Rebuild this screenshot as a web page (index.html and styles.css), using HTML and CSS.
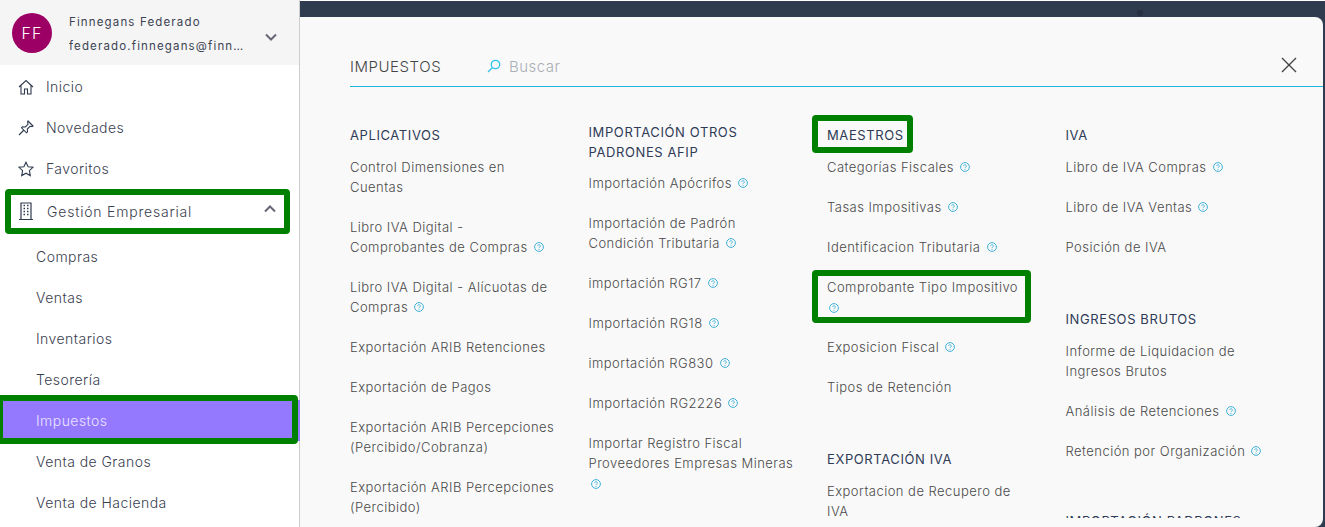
FILE: index.html
```html
<!DOCTYPE html>
<html lang="en">
<head>
    <meta charset="UTF-8">
    <meta name="viewport" content="width=device-width, initial-scale=1.0">
    <title>Impuestos</title>
    <link rel="stylesheet" href="styles.css">
</head>
<body>
    <svg class="defs" width="0" height="0">
        <symbol id="q" viewBox="0 0 10 10">
            <circle cx="5" cy="5" r="4.4" fill="none" stroke="#3fb2d6" stroke-width="1"/>
            <path d="M3.7 4a1.3 1.3 0 1 1 2 1.1c-.5.3-.7.5-.7 1" fill="none" stroke="#3fb2d6" stroke-width=".9"/>
            <circle cx="5" cy="7.3" r=".55" fill="#3fb2d6"/>
        </symbol>
    </svg>

    <aside class="sidebar">
        <div class="user">
            <div class="avatar">FF</div>
            <div class="user-info">
                <div class="user-name">Finnegans Federado</div>
                <div class="user-mail">federado.finnegans@finn…</div>
            </div>
            <svg class="chev" width="12" height="8" viewBox="0 0 12 8"><path d="M1 1.5l5 5 5-5" fill="none" stroke="#667" stroke-width="2"/></svg>
        </div>
        <nav>
            <a class="item">
                <svg class="ico" width="16" height="16" viewBox="0 0 16 16"><path d="M1 8l7-6.5L15 8M3 6.3V15h3.5v-5h3v5H13V6.3" fill="none" stroke="#2f3b4f" stroke-width="1.1"/></svg>
                Inicio
            </a>
            <a class="item">
                <svg class="ico" width="16" height="16" viewBox="0 0 16 16"><path d="M10 1l5 5-1 .6-2-.3-2.700 2.700.2 2.800-1 1-5-5 1-1 2.800.2L10 4.300 9.600 2zM5.500 10.500L1 15" fill="none" stroke="#2f3b4f" stroke-width="1.100"/></svg>
                Novedades
            </a>
            <a class="item">
                <svg class="ico" width="16" height="16" viewBox="0 0 16 16"><path d="M8 1.200l2.100 4.500 4.900.6-3.600 3.400.9 4.900L8 12.200l-4.300 2.400.9-4.900L1 6.300l4.900-.6z" fill="none" stroke="#2f3b4f" stroke-width="1.100"/></svg>
                Favoritos
            </a>
            <a class="item item-group">
                <svg class="ico ico-building" width="14" height="18" viewBox="0 0 14 18"><path d="M0 17.500h14M2 17V1h10v16" fill="none" stroke="#2f3b4f" stroke-width="1.200"/><path d="M4.500 3.500h1.500M8 3.500h1.500M4.500 6.500h1.500M8 6.500h1.500M4.500 9.500h1.500M8 9.500h1.500M4.500 12.500h1.500M8 12.500h1.500" stroke="#2f3b4f" stroke-width="1.500"/></svg>
                Gestión Empresarial
                <svg class="chev chev-up" width="12" height="8" viewBox="0 0 12 8"><path d="M1 6.500l5-5 5 5" fill="none" stroke="#667" stroke-width="2"/></svg>
                <span class="mark mark-group"></span>
            </a>
            <a class="item sub">Compras</a>
            <a class="item sub">Ventas</a>
            <a class="item sub">Inventarios</a>
            <a class="item sub">Tesorería</a>
            <a class="item sub active">Impuestos<span class="mark mark-active"></span></a>
            <a class="item sub">Venta de Granos</a>
            <a class="item sub">Venta de Hacienda</a>
        </nav>
    </aside>

    <main class="main">
        <span class="speck"></span>
        <section class="modal">
            <header class="modal-head">
                <div class="modal-title">IMPUESTOS</div>
                <svg class="search-ico" width="14" height="14" viewBox="0 0 14 14"><circle cx="8.500" cy="5.500" r="4.200" fill="none" stroke="#2cc4ee" stroke-width="1.300"/><path d="M5.500 8.500L1 13" stroke="#2cc4ee" stroke-width="1.300"/></svg>
                <div class="search-text">Buscar</div>
                <svg class="close" width="16" height="16" viewBox="0 0 16 16"><path d="M1 1l14 14M15 1L1 15" stroke="#444" stroke-width="1.400"/></svg>
            </header>
            <div class="modal-body">
                <div class="col">
                    <h4>APLICATIVOS</h4>
                    <a class="link">Control Dimensiones en<br>Cuentas</a>
                    <a class="link">Libro IVA Digital -<br>Comprobantes de Compras <svg class="q"><use href="#q"/></svg></a>
                    <a class="link">Libro IVA Digital - Alícuotas de<br>Compras <svg class="q"><use href="#q"/></svg></a>
                    <a class="link">Exportación ARIB Retenciones</a>
                    <a class="link">Exportación de Pagos</a>
                    <a class="link">Exportación ARIB Percepciones<br>(Percibido/Cobranza)</a>
                    <a class="link">Exportación ARIB Percepciones<br>(Percibido)</a>
                </div>
                <div class="col">
                    <h4 class="two-lines">IMPORTACIÓN OTROS<br>PADRONES AFIP</h4>
                    <a class="link">Importación Apócrifos <svg class="q"><use href="#q"/></svg></a>
                    <a class="link">Importación de Padrón<br>Condición Tributaria <svg class="q"><use href="#q"/></svg></a>
                    <a class="link">importación RG17 <svg class="q"><use href="#q"/></svg></a>
                    <a class="link">Importación RG18 <svg class="q"><use href="#q"/></svg></a>
                    <a class="link">importación RG830 <svg class="q"><use href="#q"/></svg></a>
                    <a class="link">Importación RG2226 <svg class="q"><use href="#q"/></svg></a>
                    <a class="link">Importar Registro Fiscal<br>Proveedores Empresas Mineras<br><svg class="q q-solo"><use href="#q"/></svg></a>
                </div>
                <div class="col">
                    <h4 class="marked">MAESTROS<span class="mark mark-head"></span></h4>
                    <a class="link">Categorías Fiscales <svg class="q"><use href="#q"/></svg></a>
                    <a class="link">Tasas Impositivas <svg class="q"><use href="#q"/></svg></a>
                    <a class="link">Identificacion Tributaria <svg class="q"><use href="#q"/></svg></a>
                    <a class="link marked">Comprobante Tipo Impositivo<br><svg class="q q-solo"><use href="#q"/></svg><span class="mark mark-link"></span></a>
                    <a class="link">Exposicion Fiscal <svg class="q"><use href="#q"/></svg></a>
                    <a class="link">Tipos de Retención</a>
                    <h4 class="next">EXPORTACIÓN IVA</h4>
                    <a class="link">Exportacion de Recupero de<br>IVA</a>
                </div>
                <div class="col">
                    <h4>IVA</h4>
                    <a class="link">Libro de IVA Compras <svg class="q"><use href="#q"/></svg></a>
                    <a class="link">Libro de IVA Ventas <svg class="q"><use href="#q"/></svg></a>
                    <a class="link">Posición de IVA</a>
                    <h4 class="next">INGRESOS BRUTOS</h4>
                    <a class="link">Informe de Liquidacion de<br>Ingresos Brutos</a>
                    <a class="link">Análisis de Retenciones <svg class="q"><use href="#q"/></svg></a>
                    <a class="link">Retención por Organización <svg class="q"><use href="#q"/></svg></a>
                    <h4 class="next last">IMPORTACIÓN PADRONES</h4>
                </div>
            </div>
        </section>
    </main>
</body>
</html>
```

FILE: styles.css
```css
body {
    font-family: Inter, "Noto Sans", sans-serif;
    margin: 0;
    padding: 0;
    display: flex;
    width: 1325px;
    height: 527px;
    overflow: hidden;
    background-color: #fff;
}

.defs {
    position: absolute;
}

/* Sidebar */
.sidebar {
    width: 299px;
    flex-shrink: 0;
    border-right: 1px solid #ccc;
    background-color: #fff;
}

.user {
    display: flex;
    align-items: center;
    height: 65px;
    box-sizing: border-box;
    padding-left: 12px;
    background-color: #f5f5f5;
}

.avatar {
    width: 40px;
    height: 40px;
    border-radius: 50%;
    background-color: #9c0065;
    color: #fff;
    font-size: 16px;
    font-weight: 300;
    letter-spacing: 1px;
    line-height: 40px;
    text-align: center;
    flex-shrink: 0;
}

.user-info {
    width: 178px;
    margin-left: 17px;
    padding-top: 2px;
    font-size: 11.5px;
    letter-spacing: 1.15px;
    color: #3c4353;
}

.user-name {
    line-height: 24px;
}

.user-mail {
    line-height: 24px;
    white-space: nowrap;
}

.chev {
    margin-left: 18px;
    margin-top: 9px;
}

.chev-up {
    margin-left: auto;
    margin-right: 23px;
    margin-top: -4px;
}

.item {
    display: flex;
    align-items: center;
    position: relative;
    height: 41px;
    padding-left: 18px;
    font-size: 14px;
    letter-spacing: 0.45px;
    font-weight: 300;
    color: #39404f;
}

nav {
    padding-top: 1px;
}

.ico {
    margin-right: 12px;
}

.ico-building {
    margin-left: 1px;
    margin-right: 14px;
}

.item-group {
    height: 42px;
    padding-top: 1px;
    margin-bottom: 4px;
    letter-spacing: 0.8px;
}

.sub {
    padding-left: 36px;
}

.active {
    background-color: #9479ff;
    color: #e9e4ff;
    margin-right: -1px;
}

/* green boxes drawn on top of the screenshot */
.mark {
    position: absolute;
    border: 6px solid #008000;
    border-radius: 4px;
    box-sizing: border-box;
}

.mark-group {
    left: 5px;
    top: 0;
    width: 285px;
    height: 45px;
}

.mark-active {
    left: -3px;
    top: -5px;
    width: 301px;
    height: 49px;
}

.mark-head {
    left: -15px;
    top: -10px;
    width: 101px;
    height: 38px;
}

.mark-link {
    left: -15px;
    top: -7px;
    width: 219px;
    height: 53px;
}

/* Modal */
.main {
    flex: 1;
    position: relative;
    margin-top: 1px;
    padding: 16px 2px 0 0;
    background-color: #2f3b4f;
}

.speck {
    position: absolute;
    left: 837px;
    top: 9px;
    width: 6px;
    height: 6px;
    border-radius: 50%;
    background-color: #273142;
}

.modal {
    height: 510px;
    background-color: #f9f9f9;
    border-radius: 0 8px 8px 0;
    padding-left: 50px;
    box-sizing: border-box;
}

.modal-head {
    display: flex;
    align-items: center;
    height: 70px;
    box-sizing: border-box;
    padding-top: 29px;
    border-bottom: 1px solid #1db6dc;
}

.modal-title {
    width: 137px;
    font-size: 15px;
    font-weight: 300;
    color: #444;
    letter-spacing: 0.55px;
}

.search-ico {
    margin-right: 8px;
}

.search-text {
    font-size: 15px;
    font-weight: 300;
    letter-spacing: 0.5px;
    color: #aaaeb5;
}

.close {
    margin-left: auto;
    margin-right: 26px;
    margin-top: -2px;
}

.modal-body {
    display: grid;
    grid-template-columns: repeat(4, 238.5px);
    height: 431px;
    box-sizing: border-box;
    padding-top: 38px;
    overflow: hidden;
}

h4 {
    margin: 0 0 12px 0;
    font-size: 13px;
    font-weight: 400;
    line-height: 20px;
    letter-spacing: 0.6px;
    color: #2f3b57;
    white-space: nowrap;
}

h4.two-lines {
    margin-top: -3px;
    margin-bottom: 11px;
}

h4.next {
    margin-top: 52px;
}

h4.last {
    margin-top: 50px;
}

.marked {
    position: relative;
}

.link {
    display: block;
    margin-bottom: 20px;
    font-size: 13px;
    font-weight: 300;
    line-height: 20px;
    letter-spacing: 0.47px;
    color: #4a4a4a;
    white-space: nowrap;
}

.q {
    width: 10px;
    height: 10px;
    margin-left: 2px;
    vertical-align: 0;
}

.q-solo {
    margin-left: 2px;
    vertical-align: -1px;
}
```
